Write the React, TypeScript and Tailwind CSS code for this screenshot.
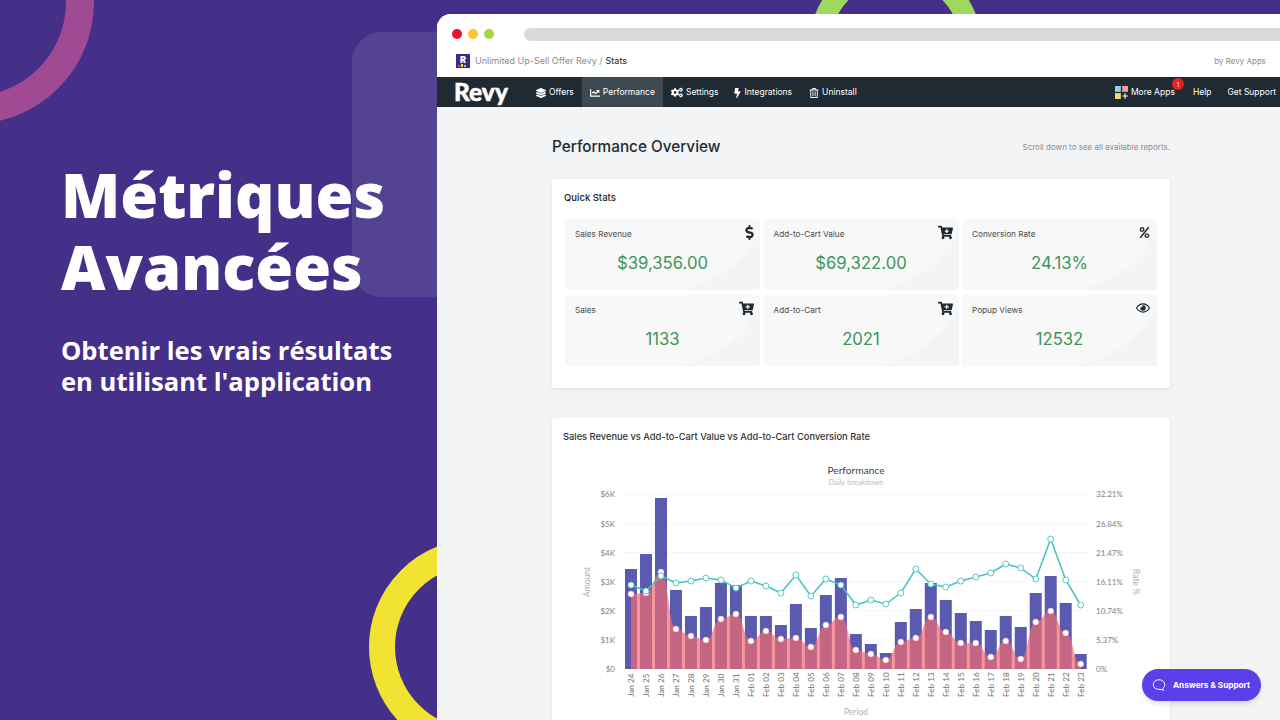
import { FaBolt, FaCartArrowDown, FaCartPlus, FaChartLine, FaCogs, FaDollarSign, FaLayerGroup, FaPercent, FaRegEye, FaRegTrashAlt } from 'react-icons/fa';
import type { IconType } from 'react-icons';

const labels = [
    'Jan 24', 'Jan 25', 'Jan 26', 'Jan 27', 'Jan 28', 'Jan 29', 'Jan 30', 'Jan 31',
    'Feb 01', 'Feb 02', 'Feb 03', 'Feb 04', 'Feb 05', 'Feb 06', 'Feb 07', 'Feb 08', 'Feb 09', 'Feb 10',
    'Feb 11', 'Feb 12', 'Feb 13', 'Feb 14', 'Feb 15', 'Feb 16', 'Feb 17', 'Feb 18', 'Feb 19', 'Feb 20',
    'Feb 21', 'Feb 22', 'Feb 23',
];
const barTops = [569, 554, 498, 590, 616, 607, 583, 585, 616, 616, 625, 604, 628, 595, 578, 634, 644, 653, 622, 609, 583, 600, 613, 621, 630, 616, 627, 593, 576, 603, 654];
const redYs = [594, 593, 572, 629, 636, 640, 619, 614, 641, 631, 639, 638, 647, 625, 617, 650, 654, 660, 642, 638, 617, 632, 643, 643, 657, 641, 659, 622, 611, 633, 664];
const tealYs = [585, 591, 576, 583, 581, 578, 580, 588, 581, 586, 593, 575, 596, 579, 585, 605, 600, 604, 593, 569, 584, 587, 581, 577, 573, 564, 568, 579, 539, 580, 605];
const leftAxis = ['$0', '$1K', '$2K', '$3K', '$4K', '$5K', '$6K'];
const rightAxis = ['0%', '5.37%', '10.74%', '16.11%', '21.47%', '26.84%', '32.21%'];

const xAt = (i: number) => 631 + i * 14.99;
const BASE = 669;

// monotone-ish smoothing for the red area
const smooth = (ys: number[]) => {
    let d = `M${xAt(0)} ${ys[0]}`;
    for (let i = 1; i < ys.length; i++) {
        const mid = (xAt(i - 1) + xAt(i)) / 2;
        d += ` C${mid} ${ys[i - 1]} ${mid} ${ys[i]} ${xAt(i)} ${ys[i]}`;
    }
    return d;
};

const Chart = () => (
    <svg viewBox="552 460 618 260" className="block w-[618px] h-[260px]" style={{ fontFamily: 'Lato, sans-serif' }}>
        <text x="856" y="474" textAnchor="middle" fontSize="10.2" fill="#444">Performance</text>
        <text x="856" y="485" textAnchor="middle" fontSize="7.5" fill="#bbb">Daily breakdown</text>
        {leftAxis.map((label, i) => {
            const y = BASE - i * 29.1;
            return (
                <g key={label}>
                    {i > 0 && <line x1="623" x2="1088" y1={y} y2={y} stroke="#f5f5f5" strokeWidth="1" />}
                    <text x="615" y={y + 3} textAnchor="end" fontSize="8" fill="#808080">{label}</text>
                    <text x="1096" y={y + 3} fontSize="8" fill="#808080">{rightAxis[i]}</text>
                </g>
            );
        })}
        <text transform="translate(590 582) rotate(-90)" textAnchor="middle" fontSize="8.5" fill="#b0b0b0">Amount</text>
        <text transform="translate(1133 582) rotate(90)" textAnchor="middle" fontSize="8.5" fill="#b0b0b0">Rate %</text>
        {barTops.map((top, i) => (
            <rect key={i} x={xAt(i) - 6} y={top} width="12" height={BASE - top} fill="#5a5ab0" />
        ))}
        <path d={`${smooth(redYs)} L${xAt(30)} ${BASE} L${xAt(0)} ${BASE} Z`} fill="#f06a70" fillOpacity="0.7" />
        <path d={tealYs.map((y, i) => `${i ? 'L' : 'M'}${xAt(i)} ${y}`).join(' ')} fill="none" stroke="#45c4bf" strokeWidth="1.5" />
        {redYs.map((y, i) => (
            <circle key={i} cx={xAt(i)} cy={y} r="3" fill="#fff" stroke="#f7a5a5" strokeWidth="0.6" />
        ))}
        {tealYs.map((y, i) => (
            <circle key={i} cx={xAt(i)} cy={y} r="3" fill="#fff" stroke="#45c4bf" strokeWidth="0.9" />
        ))}
        {labels.map((label, i) => (
            <text key={label} transform={`translate(${xAt(i) + 3} 697) rotate(-90)`} fontSize="8.2" fill="#707070">{label}</text>
        ))}
        <text x="856" y="715" textAnchor="middle" fontSize="8.5" fill="#b0b0b0">Period</text>
    </svg>
);

interface StatProps {
    label: string;
    value: string;
    icon: IconType;
    iconClass: string;
}

const stats: StatProps[] = [
    { label: 'Sales Revenue', value: '$39,356.00', icon: FaDollarSign, iconClass: '-mt-[3px] mr-[-7px] text-[15px]' },
    { label: 'Add-to-Cart Value', value: '$69,322.00', icon: FaCartArrowDown, iconClass: '-mt-[3px] mr-[-4px] text-[15px]' },
    { label: 'Conversion Rate', value: '24.13%', icon: FaPercent, iconClass: 'mr-[-3px] mt-[-1px] text-[11px]' },
    { label: 'Sales', value: '1133', icon: FaCartPlus, iconClass: '-mt-[3px] mr-[-4px] text-[15px]' },
    { label: 'Add-to-Cart', value: '2021', icon: FaCartPlus, iconClass: '-mt-[3px] mr-[-4px] text-[15px]' },
    { label: 'Popup Views', value: '12532', icon: FaRegEye, iconClass: '-mt-[3px] mr-[-3px] text-[14px]' },
];

const StatCard = ({ label, value, icon: Icon, iconClass }: StatProps) => (
    <div className="relative h-[71px] overflow-hidden rounded bg-[#f8f8f8] px-[10px] pt-[9px]">
        <svg viewBox="0 0 195 71" className="absolute inset-0 h-full w-full">
            <path d="M195 12 C182 38 160 58 118 71 L195 71 Z" fill="#f4f4f4" />
        </svg>
        <div className="relative flex items-start justify-between">
            <span className="text-[8.2px] leading-[12px] text-[#4a4a4a]">{label}</span>
            <Icon className={`text-[#1f2a33] ${iconClass}`} />
        </div>
        <div className="relative mt-[10px] text-center text-[16.7px] leading-[26px] text-[#3d9558]">{value}</div>
    </div>
);

const navItems: { label: string; icon: IconType; iconClass: string; active?: boolean }[] = [
    { label: 'Offers', icon: FaLayerGroup, iconClass: 'w-[10px] h-[10px]' },
    { label: 'Performance', icon: FaChartLine, iconClass: 'w-[10px] h-[10px]', active: true },
    { label: 'Settings', icon: FaCogs, iconClass: 'w-[12px] h-[11px]' },
    { label: 'Integrations', icon: FaBolt, iconClass: 'w-[7px] h-[10px]' },
    { label: 'Uninstall', icon: FaRegTrashAlt, iconClass: 'ml-[1px] w-[10px] h-[10px]' },
];

const Decorations = () => (
    <svg viewBox="0 0 1280 720" className="absolute inset-0 h-full w-full">
        <rect x="352" y="32" width="200" height="265" rx="30" fill="#fff" fillOpacity="0.09" />
        <circle cx="-28" cy="2" r="108" fill="none" stroke="#a04a94" strokeWidth="28" />
        <circle cx="477" cy="647" r="95" fill="none" stroke="#f2e232" strokeWidth="26" />
        <circle cx="895.5" cy="45" r="75.5" fill="none" stroke="#9ed85c" strokeWidth="21" />
    </svg>
);

const BrowserWindow = () => (
    <div className="flex h-[706px] flex-col overflow-hidden rounded-tl-[14px] bg-[#f3f4f6]">
        <div className="h-[63px] bg-white">
            <div className="flex h-[40px] items-center pl-[15px]">
                <span className="h-[10px] w-[10px] rounded-full bg-[#ee0f2d]" />
                <span className="ml-[6px] h-[10px] w-[10px] rounded-full bg-[#fbc531]" />
                <span className="ml-[6px] h-[10px] w-[10px] rounded-full bg-[#a3d83e]" />
                <span className="ml-[30px] h-[13px] flex-1 rounded-l-full bg-[#dadada]" />
            </div>
            <div className="flex h-[13px] items-center pl-[19px] pr-[14px] text-[9px] text-[#8b8b8b]">
                <span className="relative mr-[5px] flex h-[14px] w-[14px] items-start justify-center overflow-hidden bg-[#3b2a86] text-[9px] font-black leading-[11px] text-white">
                    R
                    <span className="absolute bottom-[1px] left-[2px] flex items-end gap-[1px]">
                        <span className="h-[2px] w-[2px] bg-[#ef4444]" />
                        <span className="h-[3px] w-[2px] bg-[#f2e232]" />
                        <span className="h-[2px] w-[2px] bg-[#9ed85c]" />
                    </span>
                </span>
                <span>Unlimited Up-Sell Offer Revy /</span>
                <span className="ml-[3px] text-[#222]">Stats</span>
                <span className="ml-auto text-[8px]">by Revy Apps</span>
            </div>
        </div>
        <nav className="flex h-[30px] items-center bg-[#1f2a33] text-[8.5px] text-white">
            <span className="ml-[17px] mr-[16px] w-[58px] text-[24.5px] font-black leading-none [-webkit-text-stroke:0.5px_white]" style={{ fontFamily: 'Lato, sans-serif' }}>Revy</span>
            {navItems.map(({ label, icon: Icon, iconClass, active }) => (
                <span key={label} className={`flex h-full items-center gap-[3px] px-[8px] pt-[1px] ${active ? 'bg-[#3d4a52]' : ''}`}>
                    <Icon className={iconClass} />
                    {label}
                </span>
            ))}
            <span className="relative ml-auto flex items-center gap-[3px] pt-[1px]">
                <svg viewBox="0 0 12 12" className="h-[13px] w-[13px]">
                    <rect x="0" y="0" width="5.4" height="5.4" fill="#8fd0ef" />
                    <rect x="6.6" y="0" width="5.4" height="5.4" fill="#f0a08f" />
                    <rect x="0" y="6.6" width="5.4" height="5.4" fill="#f6dc6c" />
                    <path d="M9.3 6.8v5M6.8 9.3h5" stroke="#fff" strokeWidth="1" />
                </svg>
                More Apps
                <span className="absolute right-[-9px] top-[-7px] flex h-[12px] w-[12px] items-center justify-center rounded-full bg-[#ee1c25] text-[6px] text-white">1</span>
            </span>
            <span className="ml-[18px] pt-[1px]">Help</span>
            <span className="ml-[16px] mr-[4px] pt-[1px]">Get Support</span>
        </nav>
        <main className="flex-1 overflow-hidden pl-[115px] pr-[110px]">
            <div className="flex h-[72px] items-center justify-between pt-[8px]">
                <h1 className="text-[15.3px] font-medium text-[#1f2a33]">Performance Overview</h1>
                <span className="text-[8px] text-[#8b8b8b]">Scroll down to see all available reports.</span>
            </div>
            <section className="h-[209px] rounded-[3px] bg-white px-[13px] pt-[12px] shadow-[0_1px_3px_rgba(0,0,0,0.1)]">
                <h2 className="-ml-[1px] text-[9.5px] font-medium leading-[14px] text-[#222]">Quick Stats</h2>
                <div className="mt-[14px] grid grid-cols-3 gap-x-[3.5px] gap-y-[5px]">
                    {stats.map((stat) => (
                        <StatCard key={stat.label} {...stat} />
                    ))}
                </div>
            </section>
            <section className="mt-[30px] h-[320px] rounded-[3px] bg-white pt-[12px] shadow-[0_1px_3px_rgba(0,0,0,0.1)]">
                <h2 className="pl-[11px] text-[9.3px] font-medium leading-[14px] text-[#333]">Sales Revenue vs Add-to-Cart Value vs Add-to-Cart Conversion Rate</h2>
                <div className="mt-[16px]">
                    <Chart />
                </div>
            </section>
        </main>
    </div>
);

const App = () => (
    <div className="relative flex h-[720px] w-[1280px] overflow-hidden bg-[#443088]" style={{ fontFamily: 'Inter, sans-serif' }}>
        <Decorations />
        <div className="relative w-[437px] shrink-0 pl-[61px] pt-[158px] text-white" style={{ fontFamily: '"Open Sans", sans-serif' }}>
            <h1 className="text-[61.3px] font-extrabold leading-[72px]">Métriques<br />Avancées</h1>
            <p className="mt-[33px] text-[25.6px] font-bold leading-[31px]">Obtenir les vrais résultats<br />en utilisant l'application</p>
        </div>
        <div className="relative flex-1 pt-[14px]">
            <BrowserWindow />
        </div>
        <div className="absolute left-[1142px] top-[669px] flex h-[32px] w-[119px] items-center gap-[7px] rounded-full bg-[#5b3fe8] pl-[10px] text-[8.2px] font-bold text-white shadow-md">
            <svg viewBox="0 0 16 16" className="h-[14px] w-[14px]" fill="none" stroke="#fff" strokeWidth="1.1">
                <path d="M8 2C4.2 2 1.5 4.400 1.500 7.600S4.200 13 8 13c1.400 0 3 0 5 1.200-.4-1-.4-1.800-.3-2.600 1-1 1.800-2.300 1.800-4C14.500 4.400 11.800 2 8 2Z" />
            </svg>
            Answers &amp; Support
        </div>
    </div>
);

export default App;
